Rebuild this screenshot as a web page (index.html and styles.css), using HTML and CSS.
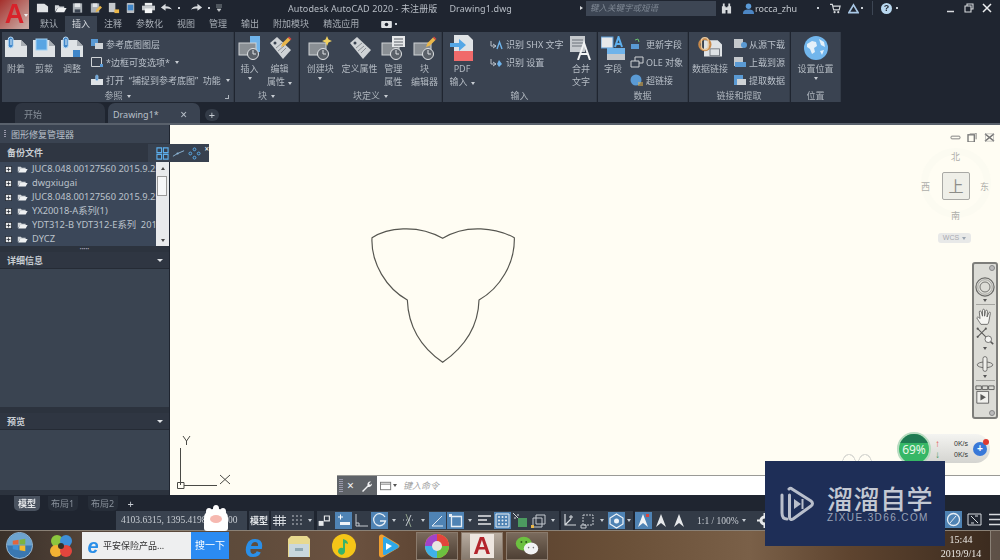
FILE: index.html
```html
<!DOCTYPE html>
<html lang="zh">
<head>
<meta charset="utf-8">
<title>AutoCAD 2020</title>
<link rel="stylesheet" href="styles.css">
</head>
<body>
<svg class="defs" aria-hidden="true">
  <symbol id="blk" viewBox="0 0 24 24"><rect x="1" y="7" width="17" height="12" fill="#8a8f94" stroke="#cfd3d6"/><circle cx="15" cy="18" r="5.5" fill="#5a6068" stroke="#e0e3e6"/><path d="M15 14v4h3" stroke="#e0e3e6" fill="none"/></symbol>
  <symbol id="pg" viewBox="0 0 24 24"><path d="M1 4h16l6 6v11H1z" fill="#dfe3e6"/><path d="M17 4v6h6z" fill="#a7adb3"/></symbol>
  <symbol id="clip" viewBox="0 0 8 14"><rect x="1.2" y="1" width="5" height="11" rx="2.5" fill="#3f86c9" stroke="#bcdcf5"/><path d="M4 3v6" stroke="#e6f2fb"/></symbol>
  <symbol id="tag" viewBox="0 0 24 24"><path d="M2 7l7-6 14 13-8 9z" fill="#cfd3d6"/><circle cx="7" cy="7" r="1.5" fill="#3a4351"/><path d="M8 12l6-5M10 15l6-5M13 17l5-5" stroke="#8a8f94"/></symbol>
  <symbol id="pencil" viewBox="0 0 12 12"><path d="M1 11l1.5-4L8 1.5l2.5 2.5L5 9.5z" fill="#e9b64a"/><path d="M8 1.5l1-1 2.500 2.500-1 1z" fill="#d8453f"/></symbol>
  <symbol id="folder" viewBox="0 0 14 10"><path d="M1 2h4l1 1.500h5v1.500H4L1 9z" fill="#d2d6da"/><path d="M4 5h9.500L11 9.500H1.500z" fill="#eef0f2"/></symbol>
  <symbol id="plusbox" viewBox="0 0 9 9"><rect x=".5" y=".5" width="8" height="8" fill="#e6e8ea" stroke="#252b34"/><path d="M2 4.500h5M4.500 2v5" stroke="#252b34"/></symbol>
</svg>

<div class="page">
  <header class="header">
    <div class="logo"><span class="logo-a">A</span><i class="caret light"></i></div>
    <div class="header-main">
      <div class="title-row">
        <div class="quick">
          <svg class="qi" viewBox="0 0 14 11"><path d="M1 1h8l4 3v6H1z" fill="#dfe2e5"/></svg>
          <svg class="qi" viewBox="0 0 14 11"><use href="#folder"/></svg>
          <svg class="qi" viewBox="0 0 14 11"><path d="M2 .5h10v10H2z" fill="#aab0b6"/><path d="M4 .5h6v4H4z" fill="#e2e5e8"/><path d="M4 7h6v3.500H4z" fill="#3a4351"/></svg>
          <svg class="qi" viewBox="0 0 14 11"><path d="M2 .5h9v10H2z" fill="#aab0b6"/><path d="M4 .5h5v4H4z" fill="#e2e5e8"/><path d="M7 10l1-3 4-4 2 2-4 4z" fill="#e9b64a"/></svg>
          <svg class="qi" viewBox="0 0 14 11"><path d="M2 0h7v10H2z" fill="#c5c9cd"/><path d="M8 7h5v4H8z" fill="#e9b64a"/></svg>
          <svg class="qi" viewBox="0 0 14 11"><rect x="3" y="0" width="8" height="11" rx="1" fill="#b9bdc2"/><rect x="4" y="2" width="6" height="6" fill="#3f86c9"/></svg>
          <svg class="qi" viewBox="0 0 14 11"><path d="M3 0h8v3H3z" fill="#eef0f2"/><path d="M0 3h14v5H0z" fill="#c5c9cd"/><path d="M3 6h8v5H3z" fill="#f4f5f6"/></svg>
          <svg class="qi" viewBox="0 0 14 11"><path d="M1 5l5-4v2.500c4 0 6 1.500 7 4-2-1.500-4-1.500-7-1.500V8.500z" fill="#d8dbde"/></svg>
          <i class="dot"></i>
          <svg class="qi redo" viewBox="0 0 14 11"><path d="M13 5L8 1v2.500c-4 0-6 1.500-7 4 2-1.500 4-1.500 7-1.500v2.500z" fill="#d8dbde"/></svg>
          <i class="dot"></i>
          <svg class="qi small" viewBox="0 0 8 8"><path d="M1 1h6M1 3h6M2 5h4l-2 2.500z" fill="#c5c9cd" stroke="#c5c9cd" stroke-width=".6"/></svg>
        </div>
        <div class="app-title"><span>Autodesk AutoCAD 2020 - 未注册版</span><span class="dwg">Drawing1.dwg</span></div>
        <i class="tri-right"></i>
        <div class="search">键入关键字或短语</div>
        <svg class="ti binoc" viewBox="0 0 12 11"><path d="M1 3h4v8H1zM7 3h4v8H7zM2 0h2v3H2zM8 0h2v3H8zM5 4h2v3H5z" fill="#d6d9dc"/></svg>
        <svg class="ti user" viewBox="0 0 12 12"><circle cx="6" cy="3.500" r="3" fill="#5b9bd8"/><path d="M0 12c0-4 2-5 6-5s6 1 6 5z" fill="#4c86c4"/></svg>
        <span class="username">rocca_zhu</span>
        <i class="dot d1"></i>
        <svg class="ti cart" viewBox="0 0 12 11"><path d="M0 1h2.500l1.500 6h6l1-4H3" fill="none" stroke="#d6d9dc" stroke-width="1.300"/><circle cx="5" cy="9.500" r="1.200" fill="#d6d9dc"/><circle cx="9" cy="9.500" r="1.200" fill="#d6d9dc"/></svg>
        <svg class="ti tri" viewBox="0 0 12 11"><path d="M6 1.500L11 10H1z" fill="none" stroke="#a9c8e6" stroke-width="1.800"/></svg>
        <i class="dot d2"></i>
        <span class="vsep"></span>
        <span class="help">?</span>
        <i class="dot d3"></i>
        <div class="win">
          <svg viewBox="0 0 10 10"><path d="M1 8.500h7" stroke="#d8dbde" stroke-width="1.500"/></svg>
          <svg viewBox="0 0 10 10"><path d="M3 3V1h6v5H7M1 3h6v6H1z" fill="none" stroke="#d8dbde" stroke-width="1.100"/></svg>
          <svg viewBox="0 0 10 10"><path d="M1 1l8 8M9 1L1 9" stroke="#eceef0" stroke-width="1.500"/></svg>
        </div>
      </div>
      <nav class="tabs">
        <span>默认</span><span class="on">插入</span><span>注释</span><span>参数化</span><span>视图</span><span>管理</span><span>输出</span><span>附加模块</span><span>精选应用</span>
        <svg class="cam" viewBox="0 0 12 9"><rect x="0" y="1" width="12" height="8" rx="1" fill="#dfe2e5"/><circle cx="6" cy="5" r="2" fill="#1f2530"/></svg><i class="dot"></i>
      </nav>
    </div>
  </header>

  <section class="ribbon">
    <div class="panel p1">
      <div class="panel-body">
        <div class="big b28"><span class="ic"><svg viewBox="0 0 24 24"><use href="#pg"/><use href="#clip" x="3" y="0" width="8" height="14"/></svg></span><span>附着</span></div>
        <div class="big b28"><span class="ic"><svg viewBox="0 0 24 24"><use href="#pg"/><rect x="4" y="3" width="11" height="11" fill="#58a5e3" stroke="#9fd0f2"/></svg></span><span>剪裁</span></div>
        <div class="big b28"><span class="ic"><svg viewBox="0 0 24 24"><use href="#pg"/><use href="#clip" x="2" y="0" width="8" height="14"/><rect x="13" y="14" width="7" height="7" fill="#3f86c9"/></svg></span><span>调整</span></div>
        <div class="rows r1">
          <div class="row"><svg viewBox="0 0 14 12"><path d="M1 1h7v7H1z" fill="#5a9ad4"/><path d="M5 5h8v6H5z" fill="#cfd3d6"/></svg>参考底图图层</div>
          <div class="row"><svg viewBox="0 0 14 12"><path d="M1.500 1.500h10v9h-10z" fill="none" stroke="#cfd3d6"/><path d="M10 8h3v3h-3z" fill="#5a9ad4"/></svg>*边框可变选项*<i class="caret"></i></div>
          <div class="row"><svg viewBox="0 0 14 12"><path d="M1 5h12v6H1z" fill="#dfe3e6"/><use href="#clip" x="5" y="0" width="4" height="8"/></svg>打开&nbsp; “捕捉到参考底图”&nbsp; 功能<i class="caret"></i></div>
        </div>
      </div>
      <div class="panel-title">参照<i class="caret"></i><i class="launch"></i></div>
    </div>

    <div class="panel p2">
      <div class="panel-body">
        <div class="big b29"><span class="ic"><svg viewBox="0 0 24 24"><rect x="12" y="0" width="10" height="16" fill="#6fb3ea"/><use href="#blk"/></svg></span><span>插入</span><i class="caret"></i></div>
        <div class="big b31"><span class="ic"><svg viewBox="0 0 24 24"><use href="#tag"/><use href="#pencil" x="12" y="0" width="12" height="12"/></svg></span><span>编辑<br>属性<i class="caret"></i></span></div>
      </div>
      <div class="panel-title">块<i class="caret"></i></div>
    </div>

    <div class="panel p3">
      <div class="panel-body">
        <div class="big b42"><span class="ic"><svg viewBox="0 0 24 24"><use href="#blk"/><path d="M19 0l1.500 3.500L24 5l-3.500 1.500L19 10l-1.500-3.500L14 5l3.500-1.500z" fill="#f0d062"/></svg></span><span>创建块</span><i class="caret"></i></div>
        <div class="big b36"><span class="ic"><svg viewBox="0 0 24 24"><use href="#tag"/></svg></span><span>定义属性</span></div>
        <div class="big b30"><span class="ic"><svg viewBox="0 0 24 24"><use href="#blk"/><rect x="11" y="0" width="13" height="11" fill="#e6e8ea"/><path d="M13 3h9M13 6h9M13 9h9" stroke="#5a6068"/></svg></span><span>管理<br>属性</span></div>
        <div class="big b33"><span class="ic"><svg viewBox="0 0 24 24"><use href="#blk"/><use href="#pencil" x="12" y="0" width="12" height="12"/></svg></span><span>块<br>编辑器</span></div>
      </div>
      <div class="panel-title">块定义<i class="caret"></i></div>
    </div>

    <div class="panel p4">
      <div class="panel-body">
        <div class="big b38"><span class="ic tall"><svg viewBox="0 0 24 26"><path d="M4 0h14l5 5v21H4z" fill="#dfe3e6"/><rect x="4" y="16" width="19" height="10" fill="#f06a6a"/><path d="M0 8h9V4l7 6-7 6v-4H0z" fill="#54a7e6"/></svg></span><span>PDF<br>输入<i class="caret"></i></span></div>
        <div class="rows r4">
          <div class="row"><svg viewBox="0 0 14 12"><path d="M1 3v5h5M3 6L6 8 3 10" fill="none" stroke="#b9c0c9"/><path d="M7 11l2.500-7L12 11" fill="none" stroke="#6fb3ea" stroke-width="1.400"/></svg>识别 SHX 文字</div>
          <div class="row"><svg viewBox="0 0 14 12"><path d="M1 3v5h5M3 6L6 8 3 10" fill="none" stroke="#b9c0c9"/><path d="M9 4l3 4-3 3-2-3z" fill="#6fb3ea"/></svg>识别 设置</div>
        </div>
        <div class="big b30 merge"><span class="ic"><svg viewBox="0 0 24 24"><path d="M1 0h15v16H1z" fill="#c5c9cd"/><path d="M3 4h11M3 7h11M3 10h11" stroke="#6a7078"/><path d="M9 24l6-17 6 17M11 18h8" fill="none" stroke="#f2f3f4" stroke-width="2"/></svg></span><span>合并<br>文字</span></div>
      </div>
      <div class="panel-title">输入</div>
    </div>

    <div class="panel p5">
      <div class="panel-body">
        <div class="big b30"><span class="ic"><svg viewBox="0 0 24 24"><rect x="0" y="1" width="12" height="11" fill="#e6e8ea" stroke="#5a9ad4"/><path d="M14 11l3.500-10L21 11M15 8h5" fill="none" stroke="#5db0ee" stroke-width="2"/><rect x="6" y="12" width="18" height="6" fill="#6fb3ea"/><rect x="6" y="18" width="18" height="6" fill="#c5c9cd"/></svg></span><span>字段</span></div>
        <div class="rows r5">
          <div class="row"><svg viewBox="0 0 14 12"><path d="M1 6h8v5H1z" fill="#5a9ad4"/><path d="M5 2l3-1 1 3" fill="none" stroke="#6cc070"/></svg>更新字段</div>
          <div class="row"><svg viewBox="0 0 14 12"><path d="M5 1h8v6H5z" fill="none" stroke="#cfd3d6"/><path d="M1 5h8v6H1z" fill="#3a4351" stroke="#cfd3d6"/></svg>OLE 对象</div>
          <div class="row"><svg viewBox="0 0 14 12"><circle cx="6" cy="6" r="5.500" fill="#5a9ad4"/><path d="M8 9h5M8 11h5" stroke="#e9b64a"/></svg>超链接</div>
        </div>
      </div>
      <div class="panel-title">数据</div>
    </div>

    <div class="panel p6">
      <div class="panel-body">
        <div class="big b43"><span class="ic"><svg viewBox="0 0 28 24"><path d="M7 3h16l5 5v14H7z" fill="#dfe3e6"/><rect x="14" y="13" width="11" height="8" fill="none" stroke="#6a7078"/><circle cx="8" cy="8" r="6.500" fill="none" stroke="#c98a4a" stroke-width="2.500"/><rect x="4" y="0" width="8" height="14" rx="4" fill="none" stroke="#e8c9a0" stroke-width="1.500"/></svg></span><span>数据链接</span></div>
        <div class="rows r6">
          <div class="row"><svg viewBox="0 0 14 12"><path d="M1 1h9v9H1z" fill="#c5c9cd"/><circle cx="11" cy="7" r="3" fill="#5a9ad4"/></svg>从源下载</div>
          <div class="row"><svg viewBox="0 0 14 12"><path d="M1 1h9v9H1z" fill="#c5c9cd"/><path d="M2 6h11v5H2z" fill="#5a9ad4"/></svg>上载到源</div>
          <div class="row"><svg viewBox="0 0 14 12"><path d="M1 1h9v10H1z" fill="#5a9ad4"/><path d="M4 5h9v6H4z" fill="#cfd3d6"/></svg>提取数据</div>
        </div>
      </div>
      <div class="panel-title">链接和提取</div>
    </div>

    <div class="panel p7">
      <div class="panel-body">
        <div class="big b50"><span class="ic"><svg viewBox="0 0 24 24"><circle cx="12" cy="12" r="12" fill="#72b6ec"/><path d="M3 8l5-3 4 1 1 4-3 2 1 4-3 2-2-5-3-2z M15 3l5 3 1 5-4-2z M16 15l4-1-2 5z" fill="#e4f0f9"/></svg></span><span>设置位置</span><i class="caret"></i></div>
      </div>
      <div class="panel-title">位置</div>
    </div>
  </section>

  <div class="doc-tabs">
    <div class="doc start">开始</div>
    <div class="doc active">Drawing1*<b>×</b></div>
    <div class="doc-plus">+</div>
  </div>
  <div class="doc-line"></div>

  <main class="main">
    <aside class="side">
      <div class="side-title"><i class="grip"></i>图形修复管理器</div>
      <div class="side-head strong"><span>备份文件</span></div>
      <div class="list">
        <ul class="tree">
          <li><svg class="pb" viewBox="0 0 9 9"><use href="#plusbox"/></svg><svg class="fd" viewBox="0 0 14 10"><use href="#folder"/></svg>JUC8.048.00127560 2015.9.25</li>
          <li><svg class="pb" viewBox="0 0 9 9"><use href="#plusbox"/></svg><svg class="fd" viewBox="0 0 14 10"><use href="#folder"/></svg>dwgxiugai</li>
          <li><svg class="pb" viewBox="0 0 9 9"><use href="#plusbox"/></svg><svg class="fd" viewBox="0 0 14 10"><use href="#folder"/></svg>JUC8.048.00127560 2015.9.25</li>
          <li><svg class="pb" viewBox="0 0 9 9"><use href="#plusbox"/></svg><svg class="fd" viewBox="0 0 14 10"><use href="#folder"/></svg>YX20018-A系列(1)</li>
          <li><svg class="pb" viewBox="0 0 9 9"><use href="#plusbox"/></svg><svg class="fd" viewBox="0 0 14 10"><use href="#folder"/></svg>YDT312-B YDT312-E系列&nbsp; 2019</li>
          <li><svg class="pb" viewBox="0 0 9 9"><use href="#plusbox"/></svg><svg class="fd" viewBox="0 0 14 10"><use href="#folder"/></svg>DYCZ</li>
        </ul>
        <div class="scroll"><i class="up"></i><span class="thumb"></span><i class="down"></i></div>
      </div>
      <div class="splitter">•••••</div>
      <div class="side-head"><span>详细信息</span><i class="caret big-caret"></i></div>
      <div class="side-fill detail"></div>
      <div class="side-gap"></div>
      <div class="side-head"><span>预览</span><i class="caret big-caret"></i></div>
      <div class="side-fill preview"></div>
    </aside>

    <div class="float-bar">
      <i class="grip"></i>
      <svg viewBox="0 0 14 14"><path d="M1 1h5v5H1zM8 1h5v5H8zM1 8h5v5H1zM8 8h5v5H8z" fill="none" stroke="#5db0ee" stroke-width="1.200"/></svg>
      <svg viewBox="0 0 14 14"><path d="M1 10l5-3 7-3" fill="none" stroke="#8fb8d8"/><circle cx="6" cy="7" r="1.200" fill="#8fb8d8"/></svg>
      <svg viewBox="0 0 14 14"><g fill="none" stroke="#5db0ee"><circle cx="7" cy="2.500" r="1.500"/><circle cx="2.500" cy="7" r="1.500"/><circle cx="11.500" cy="7" r="1.500"/><circle cx="7" cy="11.500" r="1.500"/></g></svg>
      <b>×</b>
    </div>

    <section class="canvas">
      <svg class="shape" viewBox="0 0 540 450"><path d="M66 53C110 25 200 10 278 55 350 10 440 25 493 53 495 130 450 205 387 240 385 320 345 380 278 427 210 380 175 320 172 240 110 205 62 130 66 53z" fill="none" stroke="#55554f" stroke-width="3.500" stroke-linejoin="round"/></svg>

      <svg class="ucs" viewBox="0 0 60 60"><g fill="none" stroke="#4a4a45" stroke-width="1"><path d="M6.500 13v37M10 50.500h33M3.500 47.500h6.500v6H3.500z"/><path d="M9 1l3.500 5L16 1M12.500 6v4"/><path d="M46 40l10 9M56 40l-10 9"/></g></svg>

      <div class="vp-ctrl">
        <svg viewBox="0 0 12 10"><rect x="1" y="3.500" width="10" height="3" rx="1" fill="none" stroke="#777"/></svg>
        <svg viewBox="0 0 12 10"><rect x="1" y="2" width="7" height="8" fill="none" stroke="#777" stroke-width="1.500"/><path d="M3 0h7v7" fill="none" stroke="#777"/></svg>
        <svg viewBox="0 0 12 10"><path d="M1 1l10 8M11 1L1 9" stroke="#777" stroke-width="1.500"/><rect x="1.500" y="1" width="9" height="8" fill="none" stroke="#999" stroke-width=".6"/></svg>
      </div>

      <div class="cube">
        <div class="ring"></div>
        <span class="n">北</span><span class="s">南</span><span class="w">西</span><span class="e">东</span>
        <div class="face">上</div>
        <div class="wcs">WCS <i class="caret grey"></i></div>
      </div>

      <div class="nav">
        <i class="nav-dot"></i>
        <svg class="n1 wheel" viewBox="0 0 22 22"><circle cx="11" cy="11" r="10" fill="none" stroke="#6b6b68" stroke-width="1.300"/><circle cx="11" cy="11" r="5.500" fill="none" stroke="#6b6b68"/><circle cx="11" cy="11" r="8" fill="none" stroke="#a5a5a0"/></svg>
        <i class="caret dark"></i>
        <hr>
        <svg class="n1" viewBox="0 0 22 22"><path d="M6 20c-2-3-4-6-5-8 1-2 3 0 4 1l-1-8c0-2 2-2 2.500 0L8 10V3c0-2 2.500-2 2.500 0v7l1-6c.5-2 2.500-1.500 2.500 0l-.5 7 2-5c1-1.500 2.500-1 2 .5L16 15c-.5 3-1 4-2 5z" fill="#f5f5f2" stroke="#5a5a58"/></svg>
        <svg class="n1 zoomer" viewBox="0 0 22 22"><path d="M2 2l10 10M12 2L2 12" stroke="#5a5a58" stroke-width="1.300"/><circle cx="2" cy="2" r="1.300" fill="#5a5a58"/><circle cx="12" cy="2" r="1.300" fill="#5a5a58"/><circle cx="2" cy="12" r="1.300" fill="#5a5a58"/><circle cx="15" cy="15" r="4" fill="#f5f5f2" stroke="#5a5a58"/><path d="M18 18l3 3" stroke="#5a5a58" stroke-width="2"/></svg>
        <i class="caret dark"></i>
        <svg class="n1 orbit" viewBox="0 0 22 22"><ellipse cx="11" cy="12" rx="9.500" ry="3.500" fill="none" stroke="#5a5a58"/><rect x="8.500" y="2" width="5" height="18" rx="2.500" fill="#f0f0ec" stroke="#5a5a58"/></svg>
        <i class="caret dark"></i>
        <hr>
        <svg class="n1 motion" viewBox="0 0 22 22"><path d="M1 1h6v4H1zM8 1h6v4H8zM15 1h6v4h-6z" fill="none" stroke="#5a5a58"/><path d="M2 7h13v13H2z" fill="#f0f0ec" stroke="#5a5a58"/><path d="M6 10l6 3.500L6 17z" fill="#5a5a58"/></svg>
        <i class="nav-dot end"></i>
      </div>

      <div class="speed">
        <div class="pct"><span class="pct-top"></span>69%</div>
        <div class="rate"><span><b class="up-a">↑</b>0K/s</span><span><b class="dn-a">↓</b>0K/s</span></div>
        <div class="boost">+<i></i></div>
      </div>

      <div class="ears"></div>

      <div class="cmd">
        <div class="cmd-tools"><i class="grip g2"></i><b>×</b><svg viewBox="0 0 12 12"><path d="M1 11l5.500-5.500C6 3 7.500 1 10 1.500L8 3.500 9 5l2-1.500C11 6 9 7.500 7 7l-5 5z" fill="#f2f3f4"/></svg></div>
        <div class="cmd-input"><svg viewBox="0 0 14 10"><rect x=".5" y="1" width="11" height="8" fill="none" stroke="#777"/><path d="M.5 3h11" stroke="#777"/></svg><i class="caret dark"></i><span>键入命令</span></div>
      </div>
    </section>
  </main>

  <div class="layout-tabs">
    <span class="lt on">模型</span><span class="lt">布局1</span><span class="lt">布局2</span><span class="lt-plus">+</span>
  </div>

  <div class="status">
    <div class="coords">4103.6315, 1395.4198, 0.0000</div>
    <div class="sgroup"><span class="model">模型</span></div>
    <div class="sgroup">
      <svg class="si" viewBox="0 0 17 17"><path d="M5 3v11M8.500 3v11M12 3v11M2 5.500h13M2 8.500h13M2 11.500h13" stroke="#d6dade"/></svg>
      <svg class="si" viewBox="0 0 17 17"><path d="M4 4h.01M8 4h.01M12 4h.01M4 8h.01M8 8h.01M12 8h.01M4 12h.01M8 12h.01M12 12h.01" stroke="#d6dade" stroke-width="1.600" stroke-linecap="round"/></svg>
      <i class="caret sc tight"></i>
    </div>
    <div class="sgroup g3">
      <svg class="si s13" viewBox="0 0 17 17"><path d="M2 9h6v6H2z" fill="#e6e8ea"/><path d="M9 3h6v6H9z" fill="none" stroke="#e6e8ea" stroke-width="1.400"/></svg>
      <svg class="si on" viewBox="0 0 17 17"><path d="M3 5h5M5.500 2.500v5" stroke="#fff"/><path d="M5 10h10v3H5z" fill="#eef3f8"/></svg>
      <svg class="si" viewBox="0 0 17 17"><path d="M3 2v12h12" fill="none" stroke="#c5cad0"/><path d="M3 11h3v3" fill="none" stroke="#c5cad0"/></svg>
      <svg class="si on" viewBox="0 0 17 17"><path d="M14 5A6 6 0 1 0 14.500 9H9" fill="none" stroke="#e6edf4" stroke-width="1.300"/></svg>
      <i class="caret sc"></i>
      <svg class="si" viewBox="0 0 17 17"><path d="M6 2l5 13" stroke="#8fa08a"/><path d="M11 3L6 14" stroke="#c5cad0"/><path d="M3 8h11" stroke="#c5cad0" stroke-dasharray="1 2"/></svg>
      <i class="caret sc"></i>
      <svg class="si on" viewBox="0 0 17 17"><path d="M3 14L13 4M3 14h11" fill="none" stroke="#e6edf4"/></svg>
      <svg class="si on" viewBox="0 0 17 17"><path d="M4.500 4.500h10v10h-10z" fill="none" stroke="#e6edf4" stroke-width="1.300"/><path d="M2 2h3v3H2z" fill="#e6edf4"/></svg>
      <i class="caret sc"></i>
      <svg class="si" viewBox="0 0 17 17"><path d="M2 4h13M2 8h9M2 12h13" stroke="#e6e8ea" stroke-width="1.600"/></svg>
      <svg class="si on" viewBox="0 0 17 17"><path d="M2 2h13v13H2z" fill="none" stroke="#e6edf4"/><path d="M5 5h.01M8.500 5h.01M12 5h.01M5 8.500h.01M8.500 8.500h.01M12 8.500h.01M5 12h.01M8.500 12h.01M12 12h.01" stroke="#e6edf4" stroke-width="2" stroke-linecap="round"/></svg>
      <svg class="si" viewBox="0 0 17 17"><path d="M6 6h9v9H6z" fill="#4c9a60"/><path d="M1 1l5 5" stroke="#d6dade"/><path d="M2 6h2M6 2v2" stroke="#d6dade"/></svg>
      <svg class="si" viewBox="0 0 17 17"><path d="M6 3h9v9H6zM3 6h9v9H3z" fill="none" stroke="#c5cad0"/><path d="M1 13h3v3H1z" fill="#e9b64a"/></svg>
      <i class="caret sc"></i>
    </div>
    <div class="sgroup">
      <svg class="si" viewBox="0 0 17 17"><path d="M4 2v11h11M4 13l6-6" fill="none" stroke="#d6dade" stroke-width="1.200"/><path d="M10 3v4M8 5h4" stroke="#d6dade"/></svg>
      <svg class="si" viewBox="0 0 17 17"><path d="M4 3h10v10H4z" fill="none" stroke="#c5cad0" stroke-dasharray="2 1"/><path d="M2 13h5v3H2z" fill="none" stroke="#c5cad0"/></svg>
      <i class="caret sc"></i>
      <svg class="si on" viewBox="0 0 17 17"><path d="M8.500 2L15 6v6l-6.500 4L2 12V6z" fill="none" stroke="#eef3f8" stroke-width="1.200"/><circle cx="8.500" cy="9" r="2.500" fill="#eef3f8"/></svg>
      <i class="caret sc tight"></i>
    </div>
    <div class="sgroup">
      <svg class="si on" viewBox="0 0 17 17"><path d="M3 15l5-13 5 13-5-4z" fill="#f2f4f6"/><path d="M11 2h3v3h-3z" fill="#d8453f"/></svg>
      <svg class="si" viewBox="0 0 17 17"><path d="M3 15l5-13 5 13-5-4z" fill="#e6e8ea"/></svg>
      <svg class="si" viewBox="0 0 17 17"><path d="M3 15l5-13 5 13-5-4z" fill="#e6e8ea"/></svg>
      <span class="scale">1:1 / 100%</span><i class="caret sc"></i>
      <svg class="si gear" viewBox="0 0 17 17"><circle cx="8.500" cy="8.500" r="3.500" fill="none" stroke="#e6e8ea" stroke-width="3"/><path d="M8.500 1v3M8.500 13v3M1 8.500h3M13 8.500h3" stroke="#e6e8ea" stroke-width="2"/></svg>
    </div>
    <div class="sgroup right">
      <svg class="si on" viewBox="0 0 17 17"><circle cx="8.500" cy="8.500" r="6" fill="none" stroke="#e6edf4" stroke-width="1.300"/><path d="M5 12l6-7" stroke="#e6edf4"/></svg>
      <svg class="si" viewBox="0 0 17 17"><path d="M2 3h13v11H2z" fill="none" stroke="#d6dade"/><path d="M5 5l7 7M12 5h-3M5 12h3" stroke="#d6dade"/></svg>
      <svg class="si" viewBox="0 0 17 17"><path d="M2 3.500h13M2 8.500h13M2 13.500h13" stroke="#d6dade" stroke-width="1.600"/></svg>
    </div>
  </div>

  <footer class="taskbar">
    <svg class="orb" viewBox="0 0 28 28"><circle cx="14" cy="14" r="13.500" fill="#3a77b0" stroke="#9fbcd4"/><path d="M1 14a13 13 0 0 1 26 0z" fill="#6ea4cf"/><path d="M7 9l6-1v5H7z" fill="#e2653d"/><path d="M14 8l6-1v6h-6z" fill="#7cb342"/><path d="M7 14h6v5l-6-1z" fill="#3f8fd8"/><path d="M14 14h6v6l-6-1z" fill="#f4bb2e"/></svg>
    <svg class="swirl" viewBox="0 0 24 24"><circle cx="8" cy="7" r="6" fill="#8cc63f"/><circle cx="17" cy="7" r="6" fill="#3f8fd8"/><circle cx="7" cy="17" r="6" fill="#f2b233"/><circle cx="17" cy="17" r="6" fill="#e2453d"/><circle cx="12" cy="12" r="3" fill="#33302a"/></svg>
    <div class="tb-search">
      <div class="tb-box"><span class="ie small-e">e</span><span>平安保险产品...</span></div>
      <div class="tb-go">搜一下</div>
    </div>
    <span class="ie big-e">e</span>
    <svg class="t-folder" viewBox="0 0 24 24"><path d="M1 5l3-3h16l3 3v18H1z" fill="#e8d98e"/><path d="M2 10h20v13H2z" fill="#c9d7dd"/><path d="M8 14h8v3H8z" fill="#8fa8b2"/></svg>
    <svg class="t-qq" viewBox="0 0 24 24"><circle cx="12" cy="12" r="12" fill="#f5c518"/><path d="M11 5c4 1 5 3 5 5l-3-1v8a3.500 3.500 0 1 1-2-3z" fill="#37b36a"/></svg>
    <svg class="t-video" viewBox="0 0 24 24"><path d="M2 3c0-2 2-3 4-2l15 9c2 1 2 3 0 4L6 23c-2 1-4 0-4-2z" fill="#f0a030"/><path d="M6 4c0-1 1-1 2-1l13 8c1 1 1 2 0 3L8 21c-1 0-2 0-2-1z" fill="#2fa8e8"/><path d="M9 9l6 3-6 4z" fill="#fff"/></svg>
    <div class="task"><svg viewBox="0 0 24 24"><circle cx="12" cy="12" r="12" fill="#f4bb2e"/><path d="M12 0a12 12 0 0 1 12 12H12z" fill="#e2453d"/><path d="M12 0a12 12 0 0 0-12 12h12z" fill="#a044c8"/><path d="M0 12a12 12 0 0 0 12 12V12z" fill="#3fb0e8"/><path d="M12 24a12 12 0 0 0 12-12H12z" fill="#6cc040"/><circle cx="12" cy="12" r="5" fill="#e8e4e0"/></svg></div>
    <div class="task cur"><span class="task-a">A</span></div>
    <div class="task"><svg viewBox="0 0 30 24"><ellipse cx="11" cy="9" rx="10" ry="8.500" fill="#6cc040"/><ellipse cx="20" cy="15" rx="9" ry="7.500" fill="#f2f3f4"/><circle cx="8" cy="7" r="1.200" fill="#2c5a1a"/><circle cx="14" cy="7" r="1.200" fill="#2c5a1a"/><circle cx="17" cy="14" r="1" fill="#777"/><circle cx="23" cy="14" r="1" fill="#777"/></svg></div>
    <div class="clock"><span>15:44</span><span>2019/9/14</span></div>
    <div class="show-desk"></div>
  </footer>

  <div class="paw"><i class="t1"></i><i class="t2"></i><i class="t3"></i><span class="pad"></span></div>

  <aside class="mark">
    <svg viewBox="0 0 36 36"><g fill="none" stroke="#b9bfcc" stroke-width="3" stroke-linecap="round" stroke-linejoin="round"><path d="M3 9v18c0 4 2 6 5 6"/><path d="M10 3c1-1 2-1 3 0l19 12c2 1.500 2 3.500 0 5L14 33c-2 1-3.500 0-3.500-2V9"/></g><path d="M15 13l7 5-7 5z" fill="#b9bfcc"/><path d="M23.500 13v10" stroke="#b9bfcc" stroke-width="2"/></svg>
    <div class="mark-text"><strong>溜溜自学</strong><span>ZIXUE.3D66.COM</span></div>
  </aside>
</div>
</body>
</html>
```
FILE: styles.css
```css
* { box-sizing: border-box; }
html, body { margin: 0; padding: 0; }
body { width: 1000px; height: 560px; overflow: hidden; background: #1f2530; font-family: "Noto Sans", "Noto Sans CJK SC", sans-serif; color: #b9c0c9; font-size: 9px; }
.defs { position: absolute; width: 0; height: 0; }
.page { position: relative; width: 1000px; height: 560px; display: flex; flex-direction: column; filter: blur(.35px); }
i { display: inline-block; font-style: normal; }
svg { display: block; flex: none; }

.caret { width: 0; height: 0; border: 2px solid transparent; border-top: 3px solid #c8cdd3; border-bottom: 0; margin-left: 4px; vertical-align: middle; }
.caret.light { border-top-color: #eee; }
.caret.dark { border-top-color: #555; margin: 0; }
.caret.grey { border-top-color: #9aa4b0; margin-left: 1px; }
.dot { width: 2px; height: 2px; background: #c8cdd3; }

.header { display: flex; height: 32px; flex: none; }
.logo { width: 32px; height: 30px; flex: none; position: relative; }
.logo-a { display: block; width: 29px; height: 29px; background: linear-gradient(135deg, #a5302c, #c9a6a0 90%); color: #d8222a; font: 700 27px/29px "Liberation Sans", sans-serif; text-align: center; }
.logo .caret { position: absolute; left: 24px; top: 14px; margin: 0; }
.header-main { flex: 1; display: flex; flex-direction: column; min-width: 0; }
.title-row { height: 16px; display: flex; align-items: center; }
.quick { width: 256px; padding-left: 4px; display: flex; align-items: center; gap: 4.700px; flex: none; }
.qi { width: 13px; height: 12px; }
.qi.redo { margin-left: 6px; }
.qi.small { width: 8px; height: 8px; }
.app-title { width: 292px; color: #b8bec6; font-size: 9px; letter-spacing: .1px; white-space: nowrap; display: flex; flex: none; }
.dwg { margin-left: 12px; }
.tri-right { width: 0; height: 0; border-left: 3px solid #d6d9dc; border-top: 2px solid transparent; border-bottom: 2px solid transparent; margin-right: 3px; }
.search { width: 130px; height: 15px; background: #3d4654; color: #7f8894; font-style: italic; font-size: 8.500px; line-height: 14px; padding-left: 4px; flex: none; margin-left: 0; }
.ti { width: 11px; height: 11px; margin-left: 5px; }
.binoc { margin-left: 5px; }
.user { margin-left: 11px; }
.username { color: #c4c9cf; font-size: 9px; margin-left: 1px; width: 58px; }
.d1 { margin-left: 4px; }
.cart { margin-left: 11px; }
.tri { margin-left: 7px; }
.d2 { margin-left: 2px; }
.vsep { width: 1px; height: 14px; background: #3d4654; margin-left: 9px; }
.help { width: 11px; height: 11px; border-radius: 50%; background: #b9d8f0; color: #1f2530; font: 700 9px/11px "Liberation Sans", sans-serif; text-align: center; margin-left: 8px; }
.d3 { margin-left: 4px; }
.win { display: flex; margin-left: 48px; gap: 8px; }
.win svg { width: 10px; height: 10px; }
.tabs { height: 16px; display: flex; align-items: center; padding-left: 1px; }
.tabs span { padding: 0 7px; height: 16px; line-height: 15px; color: #a8aeb6; }
.tabs span.on { background: #3a4351; color: #d5d9de; }
.cam { width: 11px; height: 8px; margin: 0 3px 0 15px; }

.ribbon { height: 70px; display: flex; gap: 1px; padding-left: 2px; flex: none; }
.panel { background: #3a4351; display: flex; flex-direction: column; height: 70px; border-right: 1px solid #333b47; }
.p1 { width: 232px; } .p2 { width: 64px; } .p3 { width: 142px; } .p4 { width: 154px; } .p5 { width: 90px; } .p6 { width: 101px; } .p7 { width: 50px; }
.panel-body { flex: 1; display: flex; min-height: 0; }
.panel-title { height: 13px; line-height: 14px; text-align: center; color: #aeb5bd; position: relative; flex: none; }
.launch { position: absolute; right: 4px; bottom: 3px; width: 4px; height: 4px; border-right: 1px solid #aeb5bd; border-bottom: 1px solid #aeb5bd; }
.big { display: flex; flex-direction: column; align-items: center; line-height: 13px; text-align: center; padding-top: 2px; color: #b3bac2; white-space: nowrap; }
.big .caret { margin: 2px 0 0; }
.big span .caret { margin-left: 3px; }
.ic { height: 27px; display: flex; align-items: center; justify-content: center; margin-bottom: 1px; }
.ic svg { width: 24px; height: 24px; }
.ic.tall svg { height: 26px; }
.b28 { width: 28px; } .b29 { width: 29px; } .b30 { width: 30px; } .b31 { width: 31px; } .b33 { width: 33px; } .b36 { width: 38px; } .b38 { width: 38px; } .b42 { width: 41px; } .b43 { width: 42px; } .b50 { width: 50px; }
.rows { display: flex; flex-direction: column; padding-top: 3px; gap: 0; }
.row { height: 18px; display: flex; align-items: center; white-space: nowrap; color: #b9c0c9; }
.row svg { width: 14px; height: 12px; margin-right: 2px; }
.row .caret { margin-left: 5px; }
.r1 { margin-left: 4px; }
.r4 { width: 76px; margin-left: 9px; font-size: 9px; }
.merge { margin-left: 0; }
.r5 { margin-left: 2px; } .r6 { margin-left: 2px; }

.doc-tabs { height: 21px; flex: none; display: flex; align-items: flex-end; padding-left: 15px; gap: 3px; }
.doc { height: 20px; width: 90px; line-height: 23px; padding-left: 9px; border-radius: 7px 7px 0 0; background: #2e3541; color: #858d97; font-size: 9px; }
.doc.active { width: 92px; background: #3a4351; color: #b9c0c9; padding-left: 5px; position: relative; }
.doc.active b { position: absolute; right: 13px; top: 0; font-weight: 400; font-size: 12px; }
.doc-plus { width: 14px; height: 12px; margin: 0 0 2px 2px; background: #333b47; border-radius: 6px; text-align: center; line-height: 11px; font-size: 11px; color: #c8cdd3; }
.doc-line { height: 2px; background: #59616c; flex: none; }

.main { height: 370px; flex: none; display: flex; position: relative; }
.side { width: 170px; flex: none; background: #2c333e; display: flex; flex-direction: column; border-right: 1px solid #1f2530; position: relative; }
.side-title { height: 18px; display: flex; align-items: center; background: #3a4351; color: #b9c0c9; font-size: 9px; padding-left: 4px; gap: 5px; }
.grip { width: 2px; height: 8px; background: repeating-linear-gradient(#99a 0 1px, transparent 1px 2px); }
.side-head { height: 16px; flex: none; display: flex; justify-content: space-between; align-items: center; padding: 0 5px 0 7px; color: #c8cdd3; font-weight: 700; font-size: 9px; background: #2f3642; }
.side-head.strong { height: 19px; }
.big-caret { border-width: 3px; border-top-width: 3px; border-bottom: 0; border-top-color: #dfe2e5; margin-right: 1px; }
.list { height: 84px; flex: none; display: flex; background: #3b4759; }
.tree { list-style: none; margin: 0; padding: 0 0 0 5px; flex: 1; min-width: 0; overflow: hidden; }
.tree li { height: 14px; display: flex; align-items: center; white-space: nowrap; font: 9.300px/14px "Noto Sans", "Noto Sans CJK SC", sans-serif; color: #bcc3cc; }
.pb { width: 7px; height: 7px; margin-right: 5px; }
.fd { width: 11px; height: 8px; margin-right: 4px; }
.scroll { width: 13px; background: #e8eaec; display: flex; flex-direction: column; align-items: center; justify-content: space-between; padding: 5px 0 4px; position: relative; }
.up { width: 0; height: 0; border: 2.500px solid transparent; border-bottom: 3px solid #444; border-top: 0; }
.down { width: 0; height: 0; border: 2.500px solid transparent; border-top: 3px solid #444; border-bottom: 0; }
.thumb { position: absolute; left: 1px; top: 14px; width: 10px; height: 20px; background: #f6f7f8; border: 1px solid #999; }
.splitter { height: 6px; flex: none; text-align: center; font-size: 5px; line-height: 6px; letter-spacing: 0; color: #aab; }
.side-fill { background: #3a4451; flex: none; border-top: 1px solid #252b35; }
.detail { height: 139px; }
.side-gap { height: 6px; flex: none; }
.preview { height: 61px; }

.float-bar { position: absolute; left: 148px; top: 19px; width: 61px; height: 18px; background: #38414f; display: flex; align-items: center; padding-left: 3px; gap: 3px; z-index: 2; }
.float-bar .grip { margin-right: 2px; }
.float-bar svg { width: 13px; height: 13px; }
.float-bar b { color: #dfe2e5; font-size: 8px; line-height: 8px; margin-top: -9px; }
.canvas { flex: 1; position: relative; background: #fffdf3; overflow: hidden; }
.shape { position: absolute; left: 180px; top: 95px; width: 180px; height: 150px; }
.ucs { position: absolute; left: 4px; top: 310px; width: 60px; height: 60px; }
.vp-ctrl { position: absolute; right: 5px; top: 8px; display: flex; gap: 6px; }
.vp-ctrl svg { width: 11px; height: 9px; }
.cube { position: absolute; left: 745px; top: 22px; width: 82px; height: 98px; color: #aeaeaa; font-size: 9px; }
.ring { position: absolute; left: 6px; top: 1px; width: 70px; height: 70px; border-radius: 50%; border: 7px solid #fcfbf1; }
.cube span { position: absolute; line-height: 11px; }
.n { left: 36px; top: 4px; } .s { left: 36px; top: 63px; } .w { left: 6px; top: 34px; } .e { left: 65px; top: 34px; }
.face { position: absolute; left: 27px; top: 25px; width: 28px; height: 28px; border: 1px solid #a9a9a5; background: #efefe8; border-radius: 2px; text-align: center; line-height: 26px; font-size: 15px; color: #8d8d88; }
.wcs { position: absolute; left: 23px; top: 86px; width: 33px; height: 10px; background: #e8e9e8; border-radius: 3px; color: #a8aab0; font: 7px/10px "Liberation Sans", sans-serif; text-align: center; }
.nav { position: absolute; left: 802px; top: 137px; width: 26px; height: 157px; border: 2px solid #7e7e7a; border-radius: 3px; background: #dcdcd6; display: flex; flex-direction: column; align-items: center; padding-top: 13px; }
.nav hr { width: 19px; height: 1px; margin: 0 0 3px; border: 0; background: #a5a5a0; }
.nav .n1 { width: 18px; height: 18px; }
.nav .wheel { width: 20px; height: 20px; }
.nav .zoomer { margin-top: 1px; }
.nav .orbit { margin-top: 3px; }
.nav .motion { margin-top: 1px; width: 20px; height: 20px; }
.nav .caret { margin: 2px 0; }
.nav-dot { position: absolute; right: 1px; top: 1px; width: 6px; height: 6px; border-radius: 50%; background: #bbb; border: 1px solid #888; }
.nav-dot.end { top: auto; bottom: 1px; }
.speed { position: absolute; left: 727px; top: 309px; width: 93px; height: 29px; border-radius: 15px; background: linear-gradient(#f4f4f1, #d4d4d0); display: flex; align-items: center; }
.pct { position: relative; width: 34px; height: 34px; flex: none; border-radius: 50%; background: #36b766; border: 2px solid #b8dcc0; color: #e8f8ea; text-align: center; font: 12px/32px "Noto Sans", sans-serif; overflow: hidden; }
.pct-top { position: absolute; left: 0; top: 0; width: 100%; height: 9px; background: #1f7a52; }
.rate { flex: 1; display: flex; flex-direction: column; gap: 2px; font: 7px/9px "Liberation Sans", sans-serif; color: #333; padding: 0 5px 0 4px; }
.rate span { display: flex; justify-content: space-between; }
.rate b { font-size: 10px; line-height: 9px; }
.up-a { color: #e0524a; } .dn-a { color: #3d9a60; }
.boost { position: relative; width: 14px; height: 14px; border-radius: 50%; background: #3878d8; color: #fff; font: 700 10px/14px "Liberation Sans", sans-serif; text-align: center; margin-right: 3px; flex: none; }
.boost i { position: absolute; right: -2px; top: -3px; width: 6px; height: 6px; border-radius: 50%; background: #e03a30; }
.ears { position: absolute; left: 671px; top: 328px; width: 32px; height: 12px; background: radial-gradient(ellipse 8px 12px at 8px 12px, transparent 80%, #dcdcd6 82%, #dcdcd6 92%, transparent 94%), radial-gradient(ellipse 8px 12px at 24px 12px, transparent 80%, #dcdcd6 82%, #dcdcd6 92%, transparent 94%); }
.cmd { position: absolute; left: 167px; right: 0; bottom: 0; height: 20px; display: flex; border-top: 1px solid #9a9a96; }
.cmd-tools { width: 40px; background: #5f6368; display: flex; align-items: center; gap: 4px; padding-left: 2px; color: #f2f3f4; }
.cmd-tools b { font-weight: 400; font-size: 12px; line-height: 12px; }
.cmd-tools svg { width: 12px; height: 12px; margin-left: 3px; }
.g2 { width: 4px; height: 14px; }
.cmd-input { flex: 1; background: #fff; display: flex; align-items: center; padding-left: 3px; color: #a0a0a0; font-style: italic; font-size: 9px; }
.cmd-input svg { width: 13px; height: 10px; }
.cmd-input span { margin-left: 6px; }

.layout-tabs { height: 16px; flex: none; display: flex; align-items: center; padding-left: 14px; }
.lt { height: 15px; line-height: 15px; margin-right: 10px; color: #8a929c; background: #262d38; border-radius: 0 0 5px 5px; width: 30px; text-align: center; white-space: nowrap; }
.lt.on { width: 26px; margin-right: 7.500px; background: #49525f; color: #e0e3e6; font-weight: 700; }
.lt-plus { color: #c8cdd3; font-size: 11px; line-height: 13px; margin-left: 0; }
.status { height: 19px; flex: none; display: flex; align-items: stretch; padding-left: 116px; gap: 2px; }
.coords { width: 131px; background: #39424f; font: 9.500px/18px "Liberation Serif", serif; color: #c8cdd3; padding-left: 5px; white-space: nowrap; }
.sgroup { display: flex; align-items: center; background: #333b47; }
.sgroup.right { position: absolute; left: 945px; background: none; gap: 3px; }
.g3 { margin-left: 1px; }
.model { width: 20px; color: #e0e3e6; font-weight: 700; text-align: center; line-height: 18px; white-space: nowrap; }
.si { width: 17px; height: 17px; margin: 0 1px 0 0; }
.si.on { background: #4f83b4; }
.si.s13 { width: 14px; margin-right: 4px; }
.sc { margin: 0 4px 0 3px; }
.sc.tight { margin: 0 2px 0 1px; }
.scale { font: 9.500px/18px "Liberation Serif", serif; color: #c8cdd3; margin-left: 8px; white-space: nowrap; }
.gear { margin: 0 0 0 6px; }

.taskbar { height: 30px; flex: none; display: flex; align-items: center; position: relative; background: linear-gradient(90deg, #3a3029 0, #54453a 9%, #5e4b3b 24%, #6b5240 35%, #573e2c 47%, #6a5038 62%, #7a6048 75%, #5e442f 85%, #3a2a1e 100%); border-top: 1px solid #8a8176; }
.orb { width: 27px; height: 27px; margin-left: 6px; }
.swirl { width: 24px; height: 24px; margin-left: 16px; }
.tb-search { display: flex; width: 147px; height: 27px; margin-left: 9px; }
.tb-box { width: 109px; background: #eeeff0; display: flex; align-items: center; color: #333; font-size: 9px; white-space: nowrap; }
.tb-go { flex: 1; background: #2b8bf2; color: #fff; text-align: center; line-height: 26px; font-size: 10px; }
.ie { color: #2a8fe8; font: 700 italic 24px/24px "Liberation Sans", sans-serif; }
.small-e { width: 20px; font-size: 20px; text-align: center; margin-left: 1px; }
.big-e { width: 24px; font-size: 33px; text-align: center; margin-left: 13px; }
.t-folder { width: 24px; height: 24px; margin-left: 21px; }
.t-qq { width: 24px; height: 24px; margin-left: 21px; }
.t-video { width: 24px; height: 24px; margin-left: 21px; }
.task { width: 42px; height: 28px; margin-left: 3px; border: 1px solid #8a7a6c; background: linear-gradient(#7a6a5c, #4e4034); display: flex; align-items: center; justify-content: center; }
.task svg { width: 24px; height: 24px; }
.t-video + .task { margin-left: 15px; }
.task.cur { background: linear-gradient(#b8aca0, #867a6e); }
.task-a { display: block; width: 24px; height: 24px; background: #eee6e0; color: #b3242c; font: 700 24px/24px "Liberation Sans", sans-serif; text-align: center; }
.clock { position: absolute; left: 935px; top: 2px; width: 52px; display: flex; flex-direction: column; align-items: center; font: 10px/14px "Liberation Serif", serif; color: #ebe8e4; }
.show-desk { position: absolute; right: 0; top: 0; bottom: 0; width: 10px; background: rgba(255,255,255,.18); border-left: 1px solid #8a8176; }

.paw { position: absolute; left: 204px; top: 509px; width: 24px; height: 22px; background: #fff; border-radius: 9px 9px 3px 3px; }
.paw i { position: absolute; top: -3px; width: 6px; height: 7px; border-radius: 50%; background: #fff; }
.paw .t1 { left: 2px; top: -1px; } .paw .t2 { left: 9px; top: -4px; } .paw .t3 { left: 16px; top: -1px; }
.pad { position: absolute; left: 6px; top: 6px; width: 12px; height: 8px; border-radius: 50%; background: #f6b8b0; }

.mark { position: absolute; left: 765px; top: 461px; width: 180px; height: 85px; background: #1e2e57; display: flex; align-items: center; padding-left: 14px; gap: 12px; }
.mark svg { width: 36px; height: 36px; }
.mark-text { display: flex; flex-direction: column; color: #c3c8d3; }
.mark-text strong { font: 500 26px/28px "Noto Sans CJK SC", sans-serif; letter-spacing: .5px; }
.mark-text span { font: 10px/12px "Liberation Sans", sans-serif; letter-spacing: 1.400px; color: #9aa3b8; }
```
